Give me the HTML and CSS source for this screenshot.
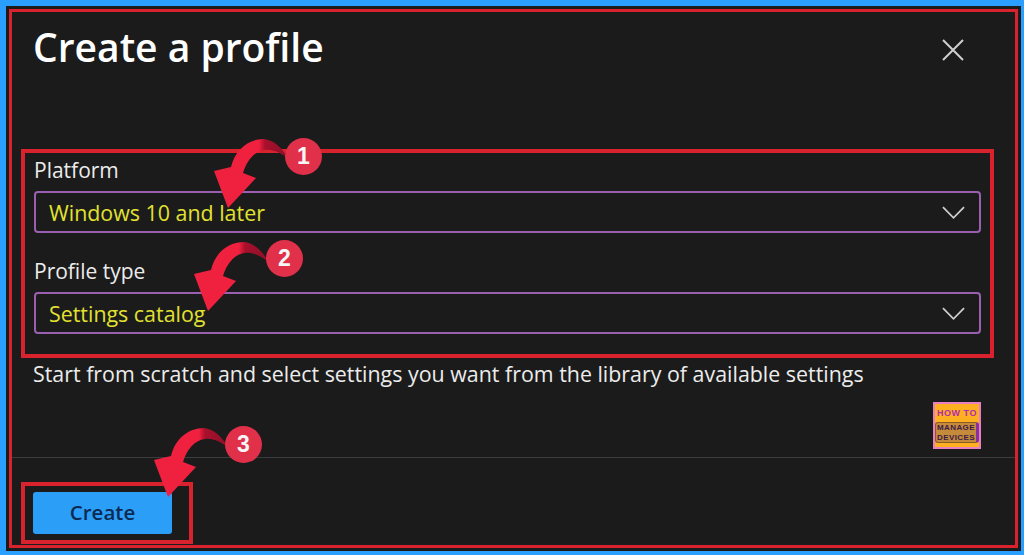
FILE: index.html
```html
<!DOCTYPE html>
<html lang="en">
<head>
  <meta charset="UTF-8"/>
  <title>Create a profile</title>
  <link rel="stylesheet" href="styles.css">
</head>
<body>

<div class="frame">
  <!-- Header -->
  <div class="header">
    <h1 class="title">Create a profile</h1>
    <svg class="close" viewBox="0 0 22 22"><path d="M1 1 21 21M21 1 1 21"/></svg>
  </div>

  <!-- Fields -->
  <div class="fields">
    <label class="field-label">Platform</label>
    <div class="select">
      <span class="select-value">Windows 10 and later</span>
      <svg class="chevron" viewBox="0 0 24 13"><path d="M1 1 12 12 23 1"/></svg>
    </div>
    <label class="field-label second">Profile type</label>
    <div class="select">
      <span class="select-value">Settings catalog</span>
      <svg class="chevron" viewBox="0 0 24 13"><path d="M1 1 12 12 23 1"/></svg>
    </div>
  </div>

  <p class="hint">Start from scratch and select settings you want from the library of available settings</p>

  <!-- Logo -->
  <div class="logo-row">
    <div class="logo">
      <span class="logo-top">HOW TO</span>
      <span class="logo-bottom">MANAGE<br>DEVICES</span>
    </div>
  </div>

  <!-- Footer -->
  <div class="footer">
    <div class="create-box">
      <button class="create-btn">Create</button>
    </div>
  </div>
</div>

<!-- Annotations -->
<svg class="arrows" viewBox="0 0 1024 555">
  <defs>
    <linearGradient id="tail" x1="0" y1="0" x2="1" y2="0">
      <stop offset="0.6" stop-color="#f0203f"/>
      <stop offset="0.68" stop-color="#a8102c"/>
      <stop offset="1" stop-color="#8e0f28"/>
    </linearGradient>
    <path id="arrow" fill="url(#tail)" d="M289 159C282 148 274 140 264 139C248 139 235 150 231 167L214 171 228 208 256 178 243 173C247 160 255 151 265 150C273 149 281 153 289 159Z"/>
  </defs>
  <use href="#arrow"/>
  <use href="#arrow" x="-20" y="103"/>
  <use href="#arrow" x="-60" y="289"/>
</svg>
<div class="badge badge-1">1</div>
<div class="badge badge-2">2</div>
<div class="badge badge-3">3</div>

</body>
</html>
```

FILE: styles.css
```css
html, body {
  margin: 0; padding: 0; overflow: hidden; background: #2b9fff;
  height: 555px;
}
body {
  padding: 8px 5px 6px 5px;
  box-sizing: border-box;
  font-family: "Open Sans", "Noto Sans", sans-serif;
}
.frame {
  box-sizing: border-box;
  height: 541px;
  margin-left: 3px;
  border: 4px solid #d8232f;
  outline: 3px solid #1b1b1b;
  outline-offset: -1px;
  background: #1b1b1b;
  color: #f0f0f0;
  display: flex;
  flex-direction: column;
}
.header {
  display: flex;
  justify-content: space-between;
  align-items: center;
  padding: 8px 51px 0 21px;
  height: 62px;
  box-sizing: border-box;
}
.title {
  margin: 0;
  font-size: 39px;
  font-weight: 600;
  color: #fff;
  line-height: 58px;
}
.close {
  width: 22px;
  height: 22px;
  margin-top: 6px;
  fill: none;
  stroke: #cfcfcf;
  stroke-width: 2;
}
.fields {
  margin: 75px 0 0 9px;
  width: 973px;
  height: 209px;
  box-sizing: border-box;
  border: 4px solid #d8232f;
  padding: 3px 9px 0 9px;
}
.field-label {
  display: block;
  font-size: 21px;
  line-height: 28px;
  color: #ececec;
}
.field-label.second {
  margin-top: 24px;
  margin-bottom: 2px;
}
.select {
  display: flex;
  justify-content: space-between;
  align-items: center;
  box-sizing: border-box;
  height: 42px;
  margin-top: 7px;
  border: 2px solid #9a5fb0;
  border-radius: 4px;
  padding: 0 14px 0 13px;
}
.select-value {
  font-size: 21.4px;
  color: #e2e230;
}
.chevron {
  width: 23px;
  height: 13px;
  fill: none;
  stroke: #cfcfcf;
  stroke-width: 1.8;
}
.hint {
  margin: 2px 0 0 21px;
  font-size: 21.4px;
  line-height: 28px;
  color: #ececec;
}
.logo-row {
  display: flex;
  justify-content: flex-end;
  padding: 14px 34px 0 0;
}
.logo {
  box-sizing: border-box;
  width: 48px;
  height: 47px;
  background: #ffb020;
  border: 2px solid #e87fc0;
  display: flex;
  flex-direction: column;
  align-items: center;
  font-family: "Liberation Sans", sans-serif;
  font-weight: bold;
}
.logo-top {
  font-size: 9px;
  line-height: 18px;
  letter-spacing: 0.5px;
  color: #b02ab0;
}
.logo-bottom {
  box-sizing: border-box;
  width: 100%;
  height: 21px;
  font-size: 8px;
  line-height: 9.5px;
  text-align: center;
  letter-spacing: 0.4px;
  color: #3a1a4a;
  background: #c58a3a;
  border: 1px solid #8a5a28;
  border-right: 3px solid #8a2fa0;
  border-radius: 3px;
}
.footer {
  margin-top: 8px;
  border-top: 1px solid #3c3c3c;
}
.create-box {
  box-sizing: border-box;
  width: 172px;
  height: 62px;
  margin: 24px 0 0 9px;
  border: 4px solid #d8232f;
  padding: 6px 0 0 8px;
}
.create-btn {
  display: block;
  width: 139px;
  height: 42px;
  padding: 0 0 2px;
  border: none;
  border-radius: 3px;
  background: #2b9ff8;
  color: #0b2a52;
  font: 600 20.5px "Open Sans", "Noto Sans", sans-serif;
}

/* annotations */
.arrows {
  position: absolute;
  top: 0; left: 0;
  width: 1024px;
  height: 555px;
}
.badge {
  position: absolute;
  width: 37px;
  height: 37px;
  border-radius: 50%;
  background: #e0304a;
  color: #f6f6f6;
  font: bold 23px/37px "Liberation Sans", sans-serif;
  text-align: center;
}
.badge-1 { left: 285px; top: 138px; }
.badge-2 { left: 266px; top: 240px; }
.badge-3 { left: 225px; top: 426px; }
```
